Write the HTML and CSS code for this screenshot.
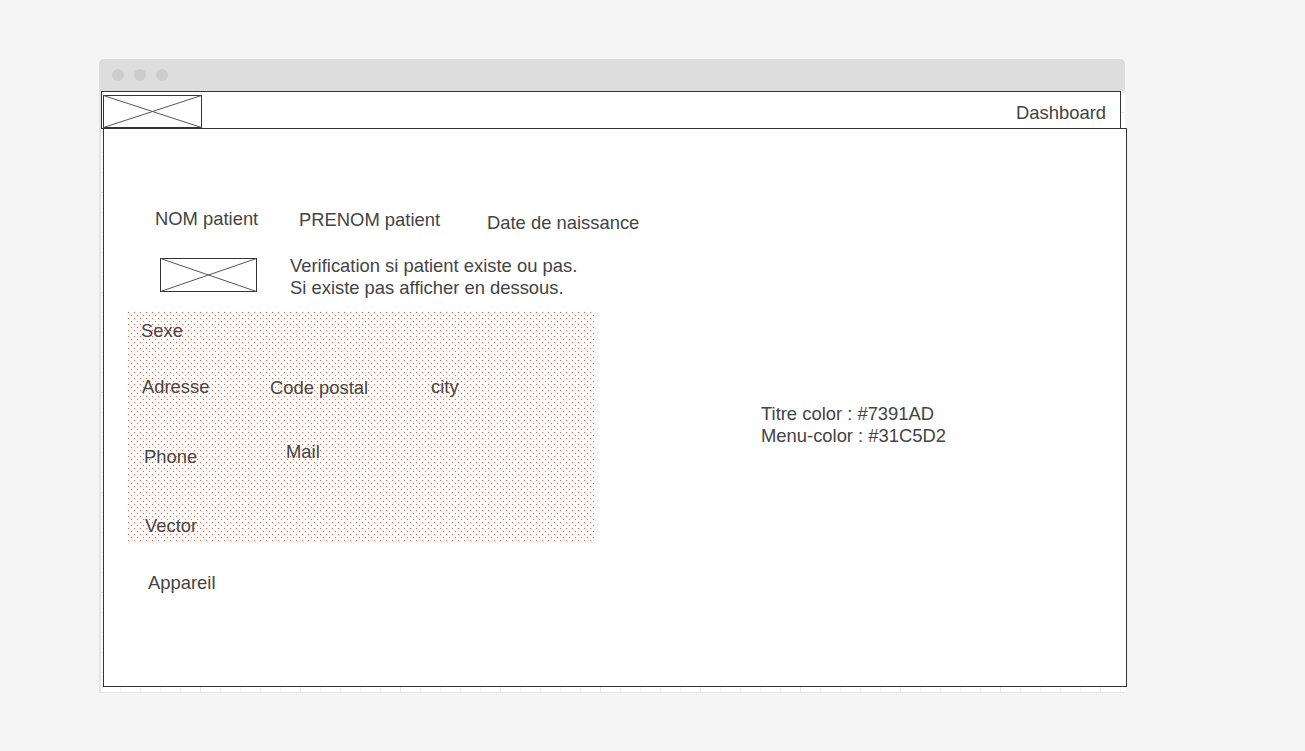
FILE: index.html
```html
<!DOCTYPE html>
<html lang="fr">
<head>
<meta charset="utf-8">
<title>Wireframe patient</title>
<link rel="stylesheet" href="styles.css">
</head>
<body>
<div class="window">
  <div class="titlebar">
    <span class="dot"></span><span class="dot"></span><span class="dot"></span>
  </div>
  <div class="viewport">
    <div class="navbar">
      <svg class="logo" viewBox="0 0 99 33" preserveAspectRatio="none">
        <rect x="0.5" y="0.5" width="98" height="32" fill="#fff" stroke="#333" stroke-width="1"/>
        <line x1="0.5" y1="0.5" x2="98.5" y2="32.5" stroke="#555" stroke-width="1"/>
        <line x1="98.5" y1="0.5" x2="0.5" y2="32.5" stroke="#555" stroke-width="1"/>
      </svg>
      <span class="nav-link">Dashboard</span>
    </div>
    <div class="content">
      <svg class="dotted" width="467" height="230">
        <defs>
          <pattern id="dots" width="6" height="6" patternUnits="userSpaceOnUse">
            <rect x="1" y="1" width="1" height="1" fill="#f5603f"/>
            <rect x="4" y="4" width="1" height="1" fill="#f5603f"/>
          </pattern>
        </defs>
        <rect width="467" height="230" fill="url(#dots)"/>
      </svg>
      <span class="label l-nom">NOM patient</span>
      <span class="label l-prenom">PRENOM patient</span>
      <span class="label l-date">Date de naissance</span>
      <svg class="img-ph" viewBox="0 0 97 34" preserveAspectRatio="none">
        <rect x="0.5" y="0.5" width="96" height="33" fill="#fff" stroke="#333" stroke-width="1"/>
        <line x1="0.5" y1="0.5" x2="96.5" y2="33.5" stroke="#555" stroke-width="1"/>
        <line x1="96.5" y1="0.5" x2="0.5" y2="33.5" stroke="#555" stroke-width="1"/>
      </svg>
      <p class="label l-verif">Verification si patient existe ou pas.<br>Si existe pas afficher en dessous.</p>
      <span class="label l-sexe">Sexe</span>
      <span class="label l-adresse">Adresse</span>
      <span class="label l-cp">Code postal</span>
      <span class="label l-city">city</span>
      <span class="label l-phone">Phone</span>
      <span class="label l-mail">Mail</span>
      <span class="label l-vector">Vector</span>
      <span class="label l-appareil">Appareil</span>
      <p class="label l-colors">Titre color : #7391AD<br>Menu-color : #31C5D2</p>
    </div>
  </div>
</div>
</body>
</html>
```
FILE: styles.css
```css
html, body {
  margin: 0;
  padding: 0;
}
body {
  background: #f5f5f5;
  font-family: "Liberation Sans", Arial, Helvetica, sans-serif;
  font-size: 18.4px;
  line-height: 22px;
  color: #444;
  padding: 59px 0 0 99px;
  height: 751px;
  box-sizing: border-box;
  overflow: hidden;
}
.window {
  width: 1026px;
}
.titlebar {
  height: 32px;
  background: #dddddd;
  border-radius: 5px 5px 0 0;
  display: flex;
  align-items: center;
  gap: 10px;
  padding-left: 13px;
  box-sizing: border-box;
}
.dot {
  width: 12px;
  height: 12px;
  border-radius: 50%;
  background: #cccccc;
}
.viewport {
  height: 602px;
  background-color: #ffffff;
  background-image:
    linear-gradient(to right, #e2e2e2 1px, transparent 1px),
    linear-gradient(to bottom, #e2e2e2 1px, transparent 1px),
    linear-gradient(to right, #efefef 1px, transparent 1px),
    linear-gradient(to bottom, #efefef 1px, transparent 1px);
  background-size: 100px 100px, 100px 100px, 20px 20px, 20px 20px;
  background-position: 1px 1px, 1px 1px, 1px 1px, 1px 1px;
  box-shadow: inset 1px 0 0 #e6e6e6, inset 0 -1px 0 #e6e6e6;
}
.navbar {
  margin-left: 2px;
  width: 1020px;
  height: 38px;
  box-sizing: border-box;
  border: 1px solid #333;
  background: #fff;
  display: flex;
  align-items: center;
  justify-content: space-between;
  padding: 0 14px 0 1px;
}
.logo {
  width: 99px;
  height: 33px;
  align-self: flex-end;
  display: block;
}
.nav-link {
  padding-top: 5px;
}
.content {
  position: relative;
  margin: -1px 0 0 4px;
  width: 1024px;
  height: 559px;
  box-sizing: border-box;
  border: 1px solid #333;
  background: #fff;
}
.dotted {
  position: absolute;
  left: 23px;
  top: 182px;
  display: block;
}
.img-ph {
  position: absolute;
  left: 56px;
  top: 129px;
  width: 97px;
  height: 34px;
  display: block;
}
.label {
  position: absolute;
  margin: 0;
  white-space: nowrap;
}
.l-nom { left: 51px; top: 79px; }
.l-prenom { left: 195px; top: 80px; }
.l-date { left: 383px; top: 83px; }
.l-verif { left: 186px; top: 126px; }
.l-sexe { left: 37px; top: 191px; }
.l-adresse { left: 38px; top: 247px; }
.l-cp { left: 166px; top: 248px; }
.l-city { left: 327px; top: 247px; }
.l-phone { left: 40px; top: 317px; }
.l-mail { left: 182px; top: 312px; }
.l-vector { left: 41px; top: 386px; }
.l-appareil { left: 44px; top: 443px; }
.l-colors { left: 657px; top: 274px; }
```
